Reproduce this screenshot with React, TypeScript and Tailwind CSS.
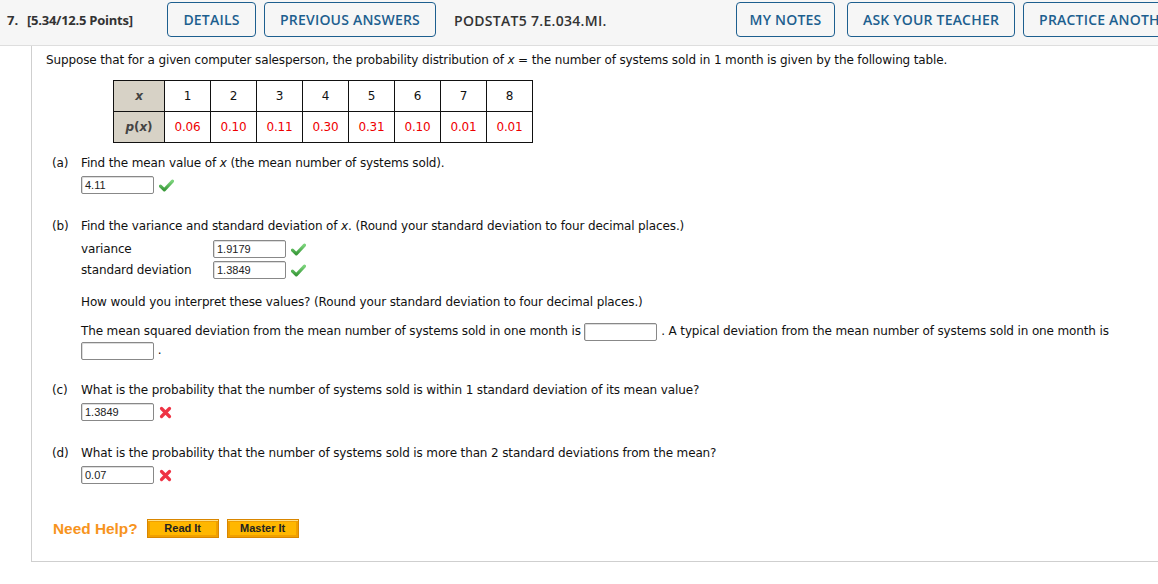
import React from "react";

const body = { fontFamily: '"DejaVu Sans", Verdana, sans-serif', letterSpacing: "-0.13px" };

function Check() {
  return (
    <svg width="15" height="13" viewBox="0 0 15 13" className="inline-block">
      <defs>
        <linearGradient id="chk" x1="0" y1="0" x2="0" y2="1">
          <stop offset="0" stopColor="#7bd37b" />
          <stop offset="1" stopColor="#3a9a3a" />
        </linearGradient>
      </defs>
      <path d="M1.5 7.2 L5.3 10.8 L13.5 2.2" fill="none" stroke="url(#chk)" strokeWidth="3.2" strokeLinecap="round" strokeLinejoin="round" />
    </svg>
  );
}

function Cross() {
  return (
    <svg width="13" height="13" viewBox="0 0 13 13" className="inline-block">
      <path d="M2.5 2.5 L10.5 10.5 M10.5 2.5 L2.5 10.5" fill="none" stroke="#ee3344" strokeWidth="3.2" strokeLinecap="round" />
    </svg>
  );
}

function Input({ value, w = "w-[73px]" }: { value?: string; w?: string }) {
  return (
    <span
      className={`inline-flex items-center h-[18px] ${w} border border-[#888] rounded-[2px] px-[3px] text-[11px] text-[#222] bg-white align-middle tracking-normal`}
      style={{ fontFamily: '"Liberation Sans", Arial, sans-serif', boxShadow: "inset 1px 1px 0 #ddd" }}
    >
      {value}
    </span>
  );
}

function HBtn({ children, w }: { children: React.ReactNode; w: string }) {
  return (
    <div
      className={`h-[35px] ${w} shrink-0 flex items-center justify-center border border-[#1d5f8f] rounded-[4px] text-[#1d5f8f] text-[14px] font-semibold bg-[#f6f6f6] whitespace-nowrap`}
      style={{ letterSpacing: "0.2px" }}
    >
      {children}
    </div>
  );
}

function HelpBtn({ children }: { children: React.ReactNode }) {
  return (
    <span
      className="w-[72px] h-[19px] border border-[#d98600] bg-[#ffb700] flex items-center justify-center text-[11px] font-bold text-[#222]"
      style={{ boxShadow: "inset 0 1px 0 #ffe08a, inset 0 0 0 2px #f0a000" }}
    >
      {children}
    </span>
  );
}

const xs = ["1", "2", "3", "4", "5", "6", "7", "8"];
const ps = ["0.06", "0.10", "0.11", "0.30", "0.31", "0.10", "0.01", "0.01"];

export default function App() {
  return (
    <div className="w-[1158px] h-[584px] overflow-hidden bg-white relative" style={{ fontFamily: '"Open Sans", sans-serif' }}>
      {/* header */}
      <div className="h-[46px] bg-[#f6f6f6] border-b border-[#dedede] flex items-start pt-[2px] text-[#333] whitespace-nowrap">
        <div className="w-[167px] shrink-0 pl-[7px] pt-[9px] text-[13px] font-bold text-[#333] flex">
          <span className="w-[20px]">7.</span>
          <span style={{ letterSpacing: "-0.25px" }}>[5.34/12.5 Points]</span>
        </div>
        <HBtn w="w-[89px]">DETAILS</HBtn>
        <div className="w-[8px] shrink-0" />
        <HBtn w="w-[172px]">PREVIOUS ANSWERS</HBtn>
        <div className="pl-[18px] pt-[8px] w-[300px] shrink-0 text-[14px] font-semibold text-[#333]" style={{ letterSpacing: "0.3px" }}>PODSTAT5 7.E.034.MI.</div>
        <HBtn w="w-[99px]">MY NOTES</HBtn>
        <div className="w-[12px] shrink-0" />
        <HBtn w="w-[168px]">ASK YOUR TEACHER</HBtn>
        <div className="w-[8px] shrink-0" />
        <HBtn w="w-[170px]">PRACTICE ANOTHER</HBtn>
      </div>

      {/* content */}
      <div className="ml-[31px] border-l border-b border-[#cfcfcf] h-[516px] pl-[14px] pt-[7px] text-[12px] text-[#111]" style={body}>
        <p className="leading-[15px]">
          Suppose that for a given computer salesperson, the probability distribution of <i>x</i> = the number of systems sold in 1 month is given by the following table.
        </p>

        <table className="ml-[67px] mt-[12px] border-collapse border border-[#111] text-[12px]">
          <tbody>
            <tr className="h-[31px]">
              <td className="w-[51px] border border-[#111] bg-[#d7d2c6] text-center font-bold text-[#444]"><i>x</i></td>
              {xs.map((x) => (
                <td key={x} className="w-[46px] border border-[#111] text-center text-[#111]">{x}</td>
              ))}
            </tr>
            <tr className="h-[31px]">
              <td className="border border-[#111] bg-[#d7d2c6] text-center font-bold text-[#444]"><i>p</i>(<i>x</i>)</td>
              {ps.map((p, i) => (
                <td key={i} className="border border-[#111] text-center text-[#e00]">{p}</td>
              ))}
            </tr>
          </tbody>
        </table>

        {/* (a) */}
        <div className="mt-[13px] flex leading-[15px]">
          <span className="w-[35px] pl-[6px] shrink-0">(a)</span>
          <div>
            <div>Find the mean value of <i>x</i> (the mean number of systems sold).</div>
            <div className="mt-[5px] flex items-center gap-[5px]"><Input value="4.11" /><Check /></div>
          </div>
        </div>

        {/* (b) */}
        <div className="mt-[25px] flex leading-[15px]">
          <span className="w-[35px] pl-[6px] shrink-0">(b)</span>
          <div>
            <div>Find the variance and standard deviation of <i>x</i>. (Round your standard deviation to four decimal places.)</div>
            <div className="mt-[6px] flex items-center">
              <span className="w-[132px]">variance</span>
              <Input value="1.9179" />
              <span className="ml-[5px]"><Check /></span>
            </div>
            <div className="mt-[3px] flex items-center">
              <span className="w-[132px]">standard deviation</span>
              <Input value="1.3849" />
              <span className="ml-[5px]"><Check /></span>
            </div>
            <div className="mt-[16px]">How would you interpret these values? (Round your standard deviation to four decimal places.)</div>
            <div className="mt-[12px] leading-[19px]">
              The mean squared deviation from the mean number of systems sold in one month is <Input /> . A typical deviation from the mean number of systems sold in one month is
              <div><Input /> .</div>
            </div>
          </div>
        </div>

        {/* (c) */}
        <div className="mt-[23px] flex leading-[15px]">
          <span className="w-[35px] pl-[6px] shrink-0">(c)</span>
          <div>
            <div>What is the probability that the number of systems sold is within 1 standard deviation of its mean value?</div>
            <div className="mt-[5px] flex items-center gap-[5px]"><Input value="1.3849" /><Cross /></div>
          </div>
        </div>

        {/* (d) */}
        <div className="mt-[25px] flex leading-[15px]">
          <span className="w-[35px] pl-[6px] shrink-0">(d)</span>
          <div>
            <div>What is the probability that the number of systems sold is more than 2 standard deviations from the mean?</div>
            <div className="mt-[5px] flex items-center gap-[5px]"><Input value="0.07" /><Cross /></div>
          </div>
        </div>

        {/* help */}
        <div className="mt-[33px] ml-[7px] flex items-center" style={{ fontFamily: '"Liberation Sans", Arial, sans-serif', letterSpacing: "0" }}>
          <span className="text-[15.4px] font-bold text-[#f7941d] mr-[9px]">Need Help?</span>
          <HelpBtn>Read It</HelpBtn>
          <span className="w-[8px]" />
          <HelpBtn>Master It</HelpBtn>
        </div>
      </div>
    </div>
  );
}
